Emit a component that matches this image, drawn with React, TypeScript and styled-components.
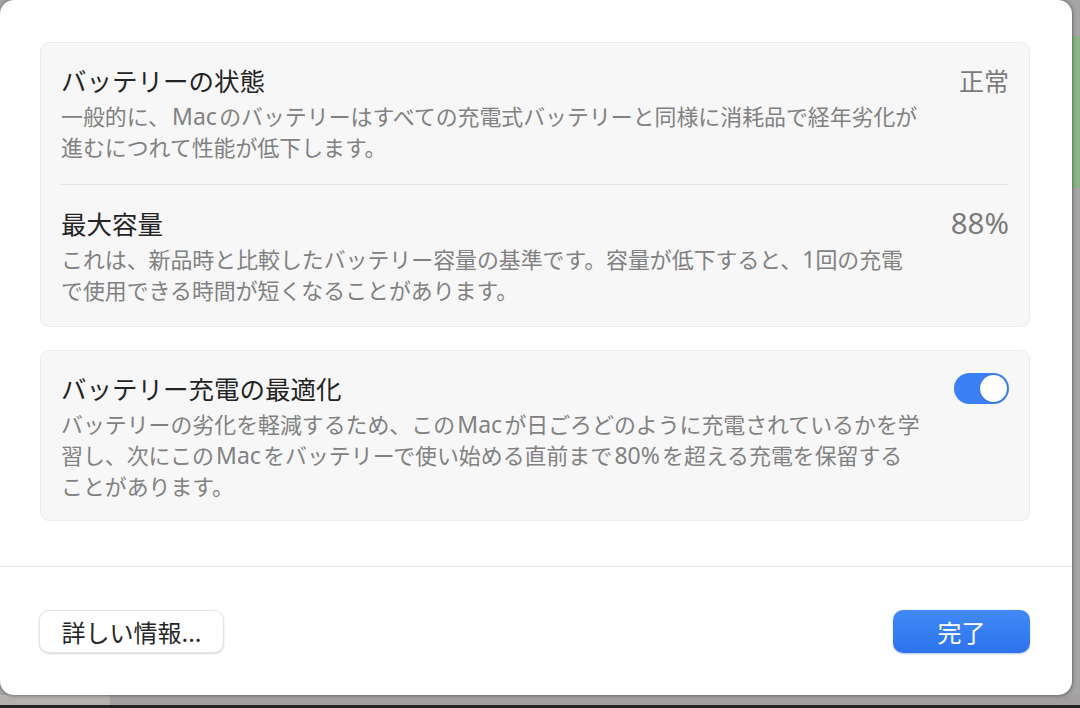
import React from "react";
import styled, { createGlobalStyle } from "styled-components";

const Global = createGlobalStyle`
  html, body { margin: 0; padding: 0; }
  body {
    width: 1080px;
    height: 708px;
    overflow: hidden;
    background: #a2a1a1;
    font-family: "Noto Sans CJK JP", "Noto Sans", sans-serif;
    -webkit-font-smoothing: antialiased;
  }
`;

const Page = styled.div`
  width: 1080px;
  height: 708px;
  display: flex;
  flex-direction: column;
  background: #a3a2a2;
`;

const TopArea = styled.div`
  display: flex;
  height: 695px;
`;

const Sheet = styled.div`
  width: 1072px;
  height: 695px;
  flex: none;
  box-sizing: border-box;
  background: #ffffff;
  border-radius: 14px;
  box-shadow: 0 0 3px rgba(0, 0, 0, 0.35), 1px 1px 4px rgba(0, 0, 0, 0.2);
  display: flex;
  flex-direction: column;
  position: relative;
  z-index: 1;
`;

const SideStrip = styled.div`
  flex: 1;
  display: flex;
  flex-direction: column;
  padding-top: 36px;
  background: #a6a5a5;
`;

const GreenPatch = styled.div`
  height: 152px;
  background: #8db489;
`;

const BottomStrip = styled.div`
  height: 10px;
  display: flex;
`;

const BottomSeg = styled.div<{ $w?: number; $c: string }>`
  ${(p) => (p.$w ? `width: ${p.$w}px; flex: none;` : "flex: 1;")}
  background: ${(p) => p.$c};
`;

const DockBar = styled.div`
  height: 3px;
  background: #242424;
`;

const Content = styled.div`
  padding: 42px 42px 45px 40px;
  display: flex;
  flex-direction: column;
  gap: 23px;
`;

const Card = styled.div`
  background: #f7f7f7;
  border: 1px solid #ebebeb;
  border-radius: 9px;
  padding: 0 20px 0 20px;
`;

const Row = styled.div<{ $pt: number; $pb: number }>`
  display: flex;
  justify-content: space-between;
  align-items: flex-start;
  padding: ${(p) => p.$pt}px 0 ${(p) => p.$pb}px 0;
`;

const Divider = styled.div`
  height: 1px;
  background: #e4e4e4;
`;

const TextBlock = styled.div`
  display: flex;
  flex-direction: column;
  gap: 4px;
`;

const Title = styled.div`
  font-size: 25.5px;
  line-height: 32px;
  color: #242424;
  white-space: nowrap;
`;

const Desc = styled.div`
  font-size: 21.9px;
  line-height: 31px;
  color: #818181;
  white-space: nowrap;
`;

const Latin = styled.span<{ $tight?: boolean }>`
  font-family: "Noto Sans", "Noto Sans CJK JP", sans-serif;
  font-size: 1.05em;
  line-height: 0;
  margin: ${(p) => (p.$tight ? "0" : "0 0.1em")};
`;

const Value = styled.div<{ $latin?: boolean }>`
  font-family: ${(p) =>
    p.$latin ? `"Noto Sans", "Noto Sans CJK JP", sans-serif` : `"Noto Sans CJK JP", sans-serif`};
  font-size: ${(p) => (p.$latin ? "29.5px" : "25px")};
  line-height: 32px;
  color: #7b7b7b;
  white-space: nowrap;
`;

const Toggle = styled.div<{ $on: boolean }>`
  width: 55px;
  height: 31px;
  margin-top: 1px;
  box-sizing: border-box;
  border-radius: 16px;
  padding: 2px;
  display: flex;
  justify-content: ${(p) => (p.$on ? "flex-end" : "flex-start")};
  background: ${(p) => (p.$on ? "#3a7ff3" : "#dcdcdc")};
`;

const Knob = styled.div`
  width: 27px;
  height: 27px;
  border-radius: 50%;
  background: #ffffff;
  box-shadow: 0 0.5px 1.5px rgba(0, 0, 0, 0.25);
`;

const Separator = styled.div`
  height: 1px;
  background: #e3e3e3;
`;

const Footer = styled.div`
  display: flex;
  justify-content: space-between;
  align-items: center;
  padding: 43px 42px 0 39px;
`;

const Button = styled.button<{ $primary?: boolean; $w: number }>`
  width: ${(p) => p.$w}px;
  height: 43px;
  box-sizing: border-box;
  border-radius: 10px;
  font-family: "Noto Sans CJK JP", "Noto Sans", sans-serif;
  font-size: 24px;
  line-height: 1;
  padding: 0;
  display: flex;
  align-items: center;
  justify-content: center;
  cursor: default;
  ${(p) =>
    p.$primary
      ? `
    color: #ffffff;
    border: none;
    background: linear-gradient(#4189f7, #2d73ed);
    box-shadow: 0 0.5px 1.5px rgba(0, 60, 160, 0.3);
  `
      : `
    color: #262626;
    border: 1px solid #e3e3e3;
    background: #ffffff;
    box-shadow: 0 1px 2px rgba(0, 0, 0, 0.16);
  `}
`;

export default function App() {
  return (
    <>
      <Global />
      <Page>
        <TopArea>
          <Sheet>
            <Content>
              <Card>
                <Row $pt={21} $pb={22}>
                  <TextBlock>
                    <Title>バッテリーの状態</Title>
                    <Desc>
                      一般的に、<Latin>Mac</Latin>のバッテリーはすべての充電式バッテリーと同様に消耗品で経年劣化が
                      <br />
                      進むにつれて性能が低下します。
                    </Desc>
                  </TextBlock>
                  <Value>正常</Value>
                </Row>
                <Divider />
                <Row $pt={22} $pb={21}>
                  <TextBlock>
                    <Title>最大容量</Title>
                    <Desc>
                      これは、新品時と比較したバッテリー容量の基準です。容量が低下すると、<Latin $tight>1</Latin>回の充電
                      <br />
                      で使用できる時間が短くなることがあります。
                    </Desc>
                  </TextBlock>
                  <Value $latin>88%</Value>
                </Row>
              </Card>
              <Card>
                <Row $pt={21} $pb={19}>
                  <TextBlock>
                    <Title>バッテリー充電の最適化</Title>
                    <Desc>
                      バッテリーの劣化を軽減するため、この<Latin>Mac</Latin>が日ごろどのように充電されているかを学
                      <br />
                      習し、次にこの<Latin>Mac</Latin>をバッテリーで使い始める直前まで<Latin>80%</Latin>を超える充電を保留する
                      <br />
                      ことがあります。
                    </Desc>
                  </TextBlock>
                  <Toggle $on>
                    <Knob />
                  </Toggle>
                </Row>
              </Card>
            </Content>
            <Separator />
            <Footer>
              <Button $w={185}>詳しい情報...</Button>
              <Button $w={137} $primary>
                完了
              </Button>
            </Footer>
          </Sheet>
          <SideStrip>
            <GreenPatch />
          </SideStrip>
        </TopArea>
        <BottomStrip>
          <BottomSeg $w={110} $c="#b3b2b1" />
          <BottomSeg $c="#a19f9f" />
        </BottomStrip>
        <DockBar />
      </Page>
    </>
  );
}
